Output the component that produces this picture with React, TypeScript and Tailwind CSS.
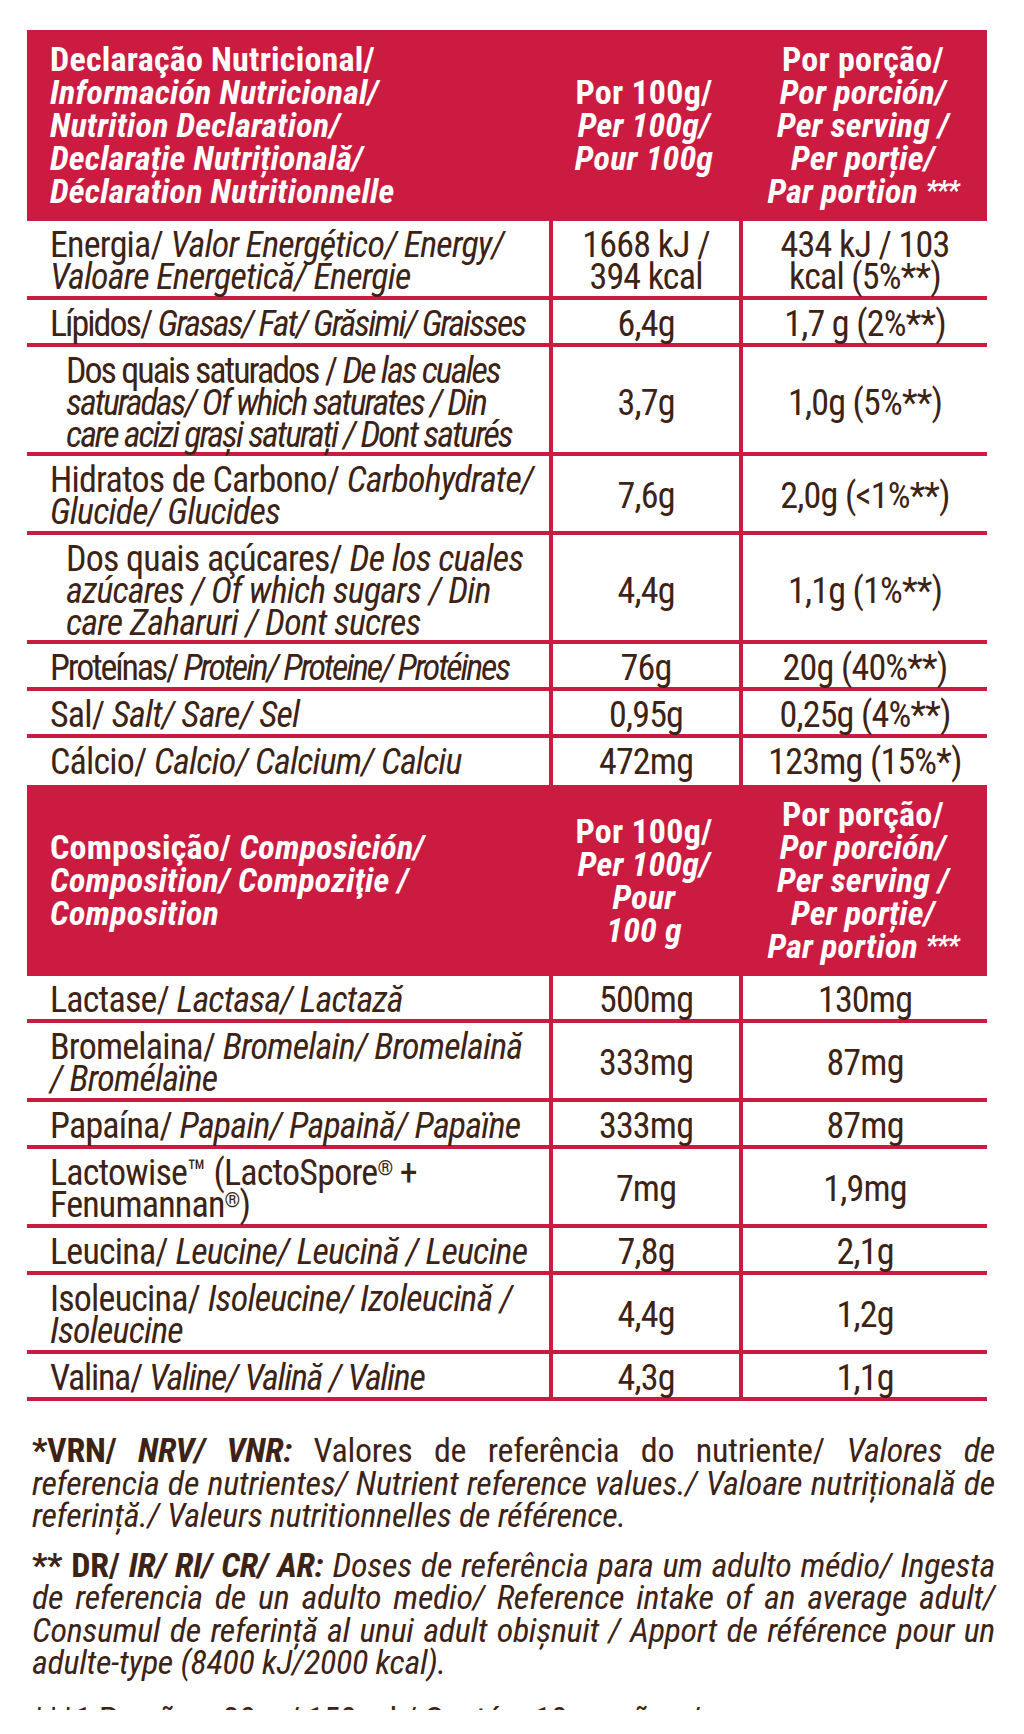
import React from 'react';

// nutrition label: crimson headers, brown condensed text
const FONT = "font-['Roboto_Condensed',Roboto,sans-serif] font-stretch-condensed";

type RowProps = {
  label: React.ReactNode;
  v1: React.ReactNode;
  v2: React.ReactNode;
  sub?: boolean;
  lines?: 1 | 2 | 3;
  track?: string;
};

const I: React.FC<{ children: React.ReactNode }> = ({ children }) => <span className="italic">{children}</span>;

const padFor = (lines: number) => (lines === 3 ? 'pt-[8px] pb-[1px]' : 'pt-[8px] pb-[3px]');

const Row: React.FC<RowProps> = ({ label, v1, v2, sub, lines = 1, track = '' }) => {
  const pad = padFor(lines);
  return (
    <div className="grid grid-cols-[522px_190px_248px] border-b-4 border-[#cb1b40]">
      <div className={`${pad} ${sub ? 'pl-[39px]' : 'pl-[23px]'} ${track} whitespace-nowrap`}>{label}</div>
      <div className={`${pad} border-l-4 border-[#cb1b40] flex items-center justify-center text-center whitespace-nowrap`}>{v1}</div>
      <div className={`${pad} border-l-4 border-[#cb1b40] flex items-center justify-center text-center whitespace-nowrap`}>{v2}</div>
    </div>
  );
};

const HeadRow: React.FC<{ c1: React.ReactNode; c2: React.ReactNode; c3: React.ReactNode }> = ({ c1, c2, c3 }) => (
  <div className="grid grid-cols-[522px_190px_248px] bg-[#cb1b40] text-white font-bold text-[34px] leading-[33px] tracking-[0.2px] py-[13px] min-h-[191px]">
    <div className="pl-[23px] flex flex-col justify-center whitespace-nowrap">{c1}</div>
    <div className="flex flex-col items-center justify-center text-center whitespace-nowrap">{c2}</div>
    <div className="flex flex-col items-center justify-center text-center whitespace-nowrap">{c3}</div>
  </div>
);

const portion = (
  <>
    <div>Por porção/</div>
    <div className="italic">Por porción/</div>
    <div className="italic">Per serving /</div>
    <div className="italic">Per porție/</div>
    <div className="italic">
      Par portion <span className="text-[27px] align-top tracking-[-1px]">***</span>
    </div>
  </>
);

export default function App() {
  return (
    <div className={`${FONT} bg-white w-[1024px] h-[1734px]`}>
      <div className="h-[1710px] overflow-hidden pt-[30px] pl-[27px] text-[#3d2316]">
        <div className="w-[960px] text-[36px] leading-[32px] tracking-[-0.8px]">
          <HeadRow
            c1={
              <>
                <div>Declaração Nutricional/</div>
                <div className="italic">Información Nutricional/</div>
                <div className="italic">Nutrition Declaration/</div>
                <div className="italic">Declarație Nutrițională/</div>
                <div className="italic">Déclaration Nutritionnelle</div>
              </>
            }
            c2={
              <>
                <div>Por 100g/</div>
                <div className="italic">Per 100g/</div>
                <div className="italic">Pour 100g</div>
              </>
            }
            c3={portion}
          />
          <Row
            lines={2}
            label={<>Energia/ <I>Valor Energético/ Energy/</I><br /><I>Valoare Energetică/ Énergie</I></>}
            v1={<>1668 kJ /<br />394 kcal</>}
            v2={<>434 kJ / 103<br />kcal (5%**)</>}
          />
          <Row track="tracking-[-2px]" label={<>Lípidos/ <I>Grasas/ Fat/ Grăsimi/ Graisses</I></>} v1="6,4g" v2="1,7 g (2%**)" />
          <Row
            sub
            lines={3}
            track="tracking-[-2px]"
            label={<>Dos quais saturados / <I>De las cuales</I><br /><I>saturadas/ Of which saturates / Din</I><br /><I>care acizi grași saturați / Dont saturés</I></>}
            v1="3,7g"
            v2="1,0g (5%**)"
          />
          <Row
            lines={2}
            label={<>Hidratos de Carbono/ <I>Carbohydrate/</I><br /><I>Glucide/ Glucides</I></>}
            v1="7,6g"
            v2="2,0g (<1%**)"
          />
          <Row
            sub
            lines={3}
            label={<>Dos quais açúcares/ <I>De los cuales</I><br /><I>azúcares / Of which sugars / Din</I><br /><I>care Zaharuri / Dont sucres</I></>}
            v1="4,4g"
            v2="1,1g (1%**)"
          />
          <Row track="tracking-[-2.2px]" label={<>Proteínas/ <I>Protein/ Proteine/ Protéines</I></>} v1="76g" v2="20g (40%**)" />
          <Row label={<>Sal/ <I>Salt/ Sare/ Sel</I></>} v1="0,95g" v2="0,25g (4%**)" />
          <div className="grid grid-cols-[522px_190px_248px]">
            <div className="pt-[8px] pb-[7px] pl-[23px] whitespace-nowrap">Cálcio/ <I>Calcio/ Calcium/ Calciu</I></div>
            <div className="pt-[8px] pb-[7px] border-l-4 border-[#cb1b40] flex items-center justify-center">472mg</div>
            <div className="pt-[8px] pb-[7px] border-l-4 border-[#cb1b40] flex items-center justify-center">123mg (15%*)</div>
          </div>
          <HeadRow
            c1={
              <>
                <div>Composição/ <span className="italic">Composición/</span></div>
                <div className="italic">Composition/ Compoziţie /</div>
                <div className="italic">Composition</div>
              </>
            }
            c2={
              <>
                <div>Por 100g/</div>
                <div className="italic">Per 100g/</div>
                <div className="italic">Pour</div>
                <div className="italic">100 g</div>
              </>
            }
            c3={portion}
          />
          <Row label={<>Lactase/ <I>Lactasa/ Lactază</I></>} v1="500mg" v2="130mg" />
          <Row
            lines={2}
            label={<>Bromelaina/ <I>Bromelain/ Bromelaină</I><br /><I>/ Bromélaïne</I></>}
            v1="333mg"
            v2="87mg"
          />
          <Row label={<>Papaína/ <I>Papain/ Papaină/ Papaïne</I></>} v1="333mg" v2="87mg" />
          <Row
            lines={2}
            label={<>Lactowise™ (LactoSpore<sup className="text-[20px]">®</sup> +<br />Fenumannan<sup className="text-[20px]">®</sup>)</>}
            v1="7mg"
            v2="1,9mg"
          />
          <Row label={<>Leucina/ <I>Leucine/ Leucină / Leucine</I></>} v1="7,8g" v2="2,1g" />
          <Row
            lines={2}
            label={<>Isoleucina/ <I>Isoleucine/ Izoleucină /</I><br /><I>Isoleucine</I></>}
            v1="4,4g"
            v2="1,2g"
          />
          <Row track="tracking-[-1.3px]" label={<>Valina/ <I>Valine/ Valină / Valine</I></>} v1="4,3g" v2="1,1g" />
        </div>

        {/* notas de rodapé */}
        <div className="mt-[33px] pl-[5px] w-[968px] text-[34px] leading-[32.5px] tracking-[-0.3px]">
          <div>
            <div className="text-justify [text-align-last:justify] whitespace-nowrap">
              <b>*VRN/ <i>NRV/ VNR:</i></b> Valores de referência do nutriente/ <I>Valores de</I>
            </div>
            <div className="italic text-justify [text-align-last:justify] whitespace-nowrap">
              referencia de nutrientes/ Nutrient reference values./ Valoare nutrițională de
            </div>
            <div className="italic whitespace-nowrap">referință./ Valeurs nutritionnelles de référence.</div>
          </div>
          <div className="mt-[17px]">
            <div className="text-justify [text-align-last:justify] whitespace-nowrap">
              <b>** DR/ <i>IR/ RI/ CR/ AR:</i></b> <I>Doses de referência para um adulto médio/ Ingesta</I>
            </div>
            <div className="italic text-justify [text-align-last:justify] whitespace-nowrap">
              de referencia de un adulto medio/ Reference intake of an average adult/
            </div>
            <div className="italic text-justify [text-align-last:justify] whitespace-nowrap">
              Consumul de referință al unui adult obișnuit / Apport de référence pour un
            </div>
            <div className="italic whitespace-nowrap">adulte-type (8400 kJ/2000 kcal).</div>
          </div>
          <div className="mt-[24px] whitespace-nowrap">***1 Porção = 30 g / 150 ml / Contém 10 porções /</div>
        </div>
      </div>
    </div>
  );
}
